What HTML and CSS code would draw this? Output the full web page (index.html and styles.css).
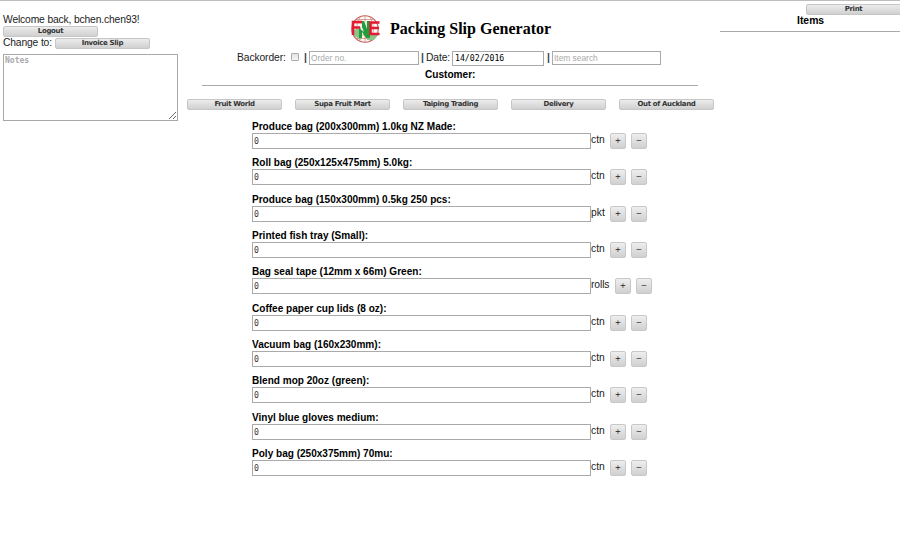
FILE: index.html
```html
<!DOCTYPE html>
<html lang="en">
<head>
<meta charset="utf-8">
<title>Packing Slip Generator</title>
<link rel="stylesheet" href="styles.css">
</head>
<body>
<div class="page">
  <aside class="left">
    <div class="welcome">Welcome back, bchen.chen93!</div>
    <button class="btn">Logout</button>
    <div class="change"><span>Change to:</span><button class="btn">Invoice Slip</button></div>
    <textarea class="notes" placeholder="Notes"></textarea>
  </aside>
  <main class="center">
    <header class="brand">
      <svg class="logo" viewBox="0 0 30 28">
        <circle cx="15" cy="14" r="13.2" fill="#fff8f5" stroke="#c0605a" stroke-width="1.1"/>
        <path d="M15 1v26M3 8h24M3 20h24M6 4.500h18M6 23.500h18M10 2q-7 12 0 24M20 2q7 12 0 24" fill="none" stroke="#c98278" stroke-width=".7"/>
        <path d="M4 15l7-3v13l-7-4zM17 20h11l-4 5h-7z" fill="#8cc58a"/>
        <path d="M9 23V13l5 4-2-5V6h8v17h-4l-4-6v6z" fill="#259b3b"/>
        <path d="M14 6l3 8V6z" fill="#dff0da"/>
        <path d="M3 20V7h9M3 12.500h7M29.500 7.500H20.500V19H29.500M20.500 13H29" fill="none" stroke="#e21b32" stroke-width="2.600"/>
      </svg>
      <h1>Packing Slip Generator</h1>
    </header>
    <div class="filters">
      <span>Backorder:</span><input class="check" type="checkbox"><b class="bar">|</b><input class="field order" placeholder="Order no."><b class="bar gap">|</b><span class="date-label">Date:</span><input class="field date" value="14/02/2016"><b class="bar">|</b><input class="field search" placeholder="Item search">
    </div>
    <div class="customer">Customer:</div>
    <hr class="rule">
    <nav class="groups">
      <button class="btn">Fruit World</button><button class="btn">Supa Fruit Mart</button><button class="btn">Taiping Trading</button><button class="btn">Delivery</button><button class="btn">Out of Auckland</button>
    </nav>
    <section class="items">
      <div class="item"><label>Produce bag (200x300mm) 1.0kg NZ Made:</label><div class="line"><input class="qty" value="0"><span>ctn</span><button class="step">+</button><button class="step">−</button></div></div>
      <div class="item"><label>Roll bag (250x125x475mm) 5.0kg:</label><div class="line"><input class="qty" value="0"><span>ctn</span><button class="step">+</button><button class="step">−</button></div></div>
      <div class="item"><label>Produce bag (150x300mm) 0.5kg 250 pcs:</label><div class="line"><input class="qty" value="0"><span>pkt</span><button class="step">+</button><button class="step">−</button></div></div>
      <div class="item"><label>Printed fish tray (Small):</label><div class="line"><input class="qty" value="0"><span>ctn</span><button class="step">+</button><button class="step">−</button></div></div>
      <div class="item"><label>Bag seal tape (12mm x 66m) Green:</label><div class="line"><input class="qty" value="0"><span class="wide">rolls</span><button class="step">+</button><button class="step">−</button></div></div>
      <div class="item"><label>Coffee paper cup lids (8 oz):</label><div class="line"><input class="qty" value="0"><span>ctn</span><button class="step">+</button><button class="step">−</button></div></div>
      <div class="item"><label>Vacuum bag (160x230mm):</label><div class="line"><input class="qty" value="0"><span>ctn</span><button class="step">+</button><button class="step">−</button></div></div>
      <div class="item"><label>Blend mop 20oz (green):</label><div class="line"><input class="qty" value="0"><span>ctn</span><button class="step">+</button><button class="step">−</button></div></div>
      <div class="item"><label>Vinyl blue gloves medium:</label><div class="line"><input class="qty" value="0"><span>ctn</span><button class="step">+</button><button class="step">−</button></div></div>
      <div class="item"><label>Poly bag (250x375mm) 70mu:</label><div class="line"><input class="qty" value="0"><span>ctn</span><button class="step">+</button><button class="step">−</button></div></div>
    </section>
  </main>
  <aside class="right">
    <button class="btn">Print</button>
    <h2>Items</h2>
    <hr class="rule">
  </aside>
</div>
</body>
</html>
```
FILE: styles.css
```css
* { box-sizing: border-box; }
body {
  margin: 0;
  background: #fff;
  color: #222;
  font: 10.3px/12px "Liberation Sans", Arial, sans-serif;
}
.page {
  display: grid;
  grid-template-columns: 180px 540px 180px;
  height: 549px;
  border-top: 1px solid #bdbdbd;
  overflow: hidden;
}
input, button, textarea { margin: 0; font: inherit; outline: 0; border-radius: 0; }
.btn {
  display: block;
  flex: none;
  width: 95px;
  height: 11px;
  padding: 0;
  border: 1px solid #c6c6c6;
  border-radius: 2px;
  background: linear-gradient(#ececec, #d0d0d0);
  color: #333;
  font: bold 7px/9px "DejaVu Sans", Verdana, sans-serif;
  letter-spacing: -0.35px;
  text-align: center;
  white-space: nowrap;
}
.left { padding: 13px 0 0 3px; }
.welcome { height: 12px; letter-spacing: -0.15px; white-space: nowrap; }
.change { display: flex; align-items: center; gap: 3px; height: 12px; letter-spacing: -0.15px; }
.notes {
  display: block;
  width: 175px;
  height: 67px;
  margin-top: 5px;
  padding: 1px;
  border: 1px solid #a9a9a9;
  font: bold 8px/10px "DejaVu Sans Mono", monospace;
}
::placeholder { color: #aaa; opacity: 1; }
.brand { display: flex; align-items: center; height: 28px; margin: 14px 0 0 170px; }
.logo { width: 30px; height: 28px; flex: none; }
h1 {
  margin: 0 0 0 10px;
  color: #000;
  font: bold 16.05px/20px "Liberation Serif", "Times New Roman", serif;
  white-space: nowrap;
}
.filters { display: flex; align-items: center; height: 16px; margin: 7px 0 0 57px; white-space: nowrap; }
.filters > span:first-child { width: 49px; letter-spacing: -0.1px; }
.check {
  appearance: none;
  width: 8px;
  height: 8px;
  margin: -2px 4px 0 5px;
  border: 1px solid #aaa;
  border-radius: 1px;
  background: linear-gradient(#e3e3e3, #f5f5f5);
}
.bar { width: 6px; padding-left: 1px; color: #345; }
.bar.gap { margin-left: 1px; }
.date-label { width: 26px; letter-spacing: -0.1px; }
.field { height: 14px; padding: 1px; border: 1px solid #aaa; font-size: 8.4px; }
.order { width: 110px; }
.date { width: 92px; height: 15px; margin-right: 2px; padding: 1px 2px; font: 8.2px "DejaVu Sans Mono", monospace; }
.search { width: 109px; }
.customer { height: 13px; margin: 3px 0 0 245px; color: #000; font-size: 10.1px; font-weight: bold; }
.rule { height: 1px; margin: 0; border: 0; background: #aaa; }
.center .rule { width: 496px; margin: 3px 0 0 22px; }
.groups { display: flex; gap: 13px; margin: 13px 0 0 7px; }
.items { margin: 11px 0 0 72px; }
.item { height: 36.33px; }
.item label { display: block; height: 12px; color: #000; font-size: 10.05px; font-weight: bold; white-space: nowrap; }
.line { display: flex; height: 16px; }
.qty { width: 339px; height: 16px; padding: 0 1px; border: 1px solid #aaa; color: #433; font: 8.2px "DejaVu Sans Mono", monospace; }
.line span { width: 19px; margin-top: 1px; }
.line .wide { width: 24px; letter-spacing: -0.1px; }
.step {
  width: 16px;
  height: 16px;
  padding: 0;
  margin-right: 5px;
  border: 1px solid #c8c8c8;
  border-radius: 2px;
  background: linear-gradient(#eee, #d0d0d0);
  color: #222;
  font: 7.5px/14px "DejaVu Sans", sans-serif;
}
.right .btn { margin: 3px 0 0 86px; }
.right h2 { height: 13px; margin: 0 0 0 77px; color: #000; font-size: 10.4px; line-height: 12px; }
.right .rule { margin-top: 3px; }
```
